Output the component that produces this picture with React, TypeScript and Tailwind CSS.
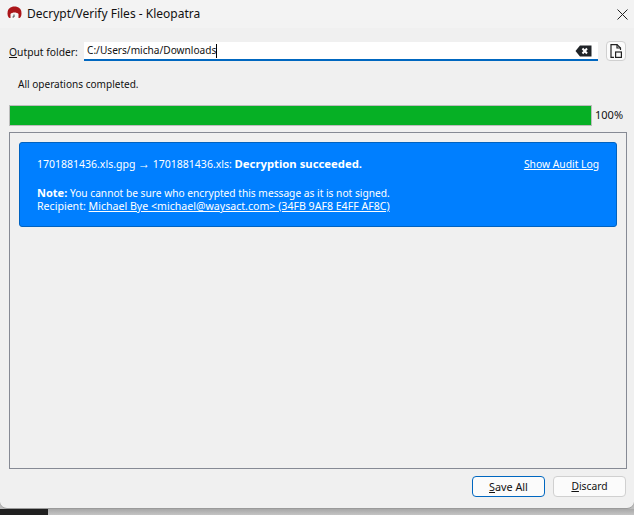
function AppIcon() {
  return (
    <svg width="15" height="15" viewBox="0 0 15 15" className="shrink-0 mb-[1px]">
      <path d="M0.5 7.5 C0.5 2.5 3.5 0.5 7.5 0.5 C11.5 0.5 14.5 2.5 14.5 7.5 C14.5 10 13.5 11.5 12.5 12 L2.5 12 C1.5 11.5 0.5 10 0.5 7.5 Z" fill="#ab1519" />
      <path d="M3.5 8 C5 6 10 6 11.5 8 L11.5 12 C10.5 15 4.5 15 3.5 12 Z" fill="#f8f6f6" />
      <path d="M7 8.5 L7 11 L5.5 11" stroke="#444" strokeWidth="1" fill="none" />
    </svg>
  );
}

function CloseIcon() {
  return (
    <svg width="11" height="11" viewBox="0 0 11 11" stroke="#222" strokeWidth="1">
      <path d="M0.5 0.5 L10.5 10.5 M10.5 0.5 L0.5 10.5" />
    </svg>
  );
}

function ClearIcon() {
  return (
    <svg width="17" height="12" viewBox="0 0 17 12">
      <path d="M5 0.5 H16.5 V11.5 H5 L0.5 6 Z" fill="#202428" />
      <path d="M7.5 3.5 L12 8.5 M12 3.5 L7.5 8.5" stroke="#fff" strokeWidth="2" />
    </svg>
  );
}

function FileIcon() {
  return (
    <svg width="12" height="14" viewBox="0 0 12 14" fill="none" stroke="#222" strokeWidth="1.2">
      <path d="M4 13.4 H1 V0.6 H7 L10.5 4 V6" />
      <path d="M7 0.6 V4 H10.5" />
      <rect x="5.6" y="8" width="5.8" height="5.4" />
    </svg>
  );
}

export default function App() {
  return (
    <div className="w-[634px] h-[515px] overflow-hidden bg-[#bdbdbd] flex flex-col font-['Noto_Sans',sans-serif] text-[10.3px] text-[#111]">
      <div className="h-[509px] shrink-0 bg-[#f0f0f0] rounded-b-[7px] border-b border-[#9a9a9a] flex flex-col">
        {/* Title bar */}
        <div className="h-[28px] shrink-0 bg-[#f3f3f3] flex items-center pl-[7px] pr-[6px]">
          <AppIcon />
          <span className="ml-[5px] text-[12px]">Decrypt/Verify Files - Kleopatra</span>
          <button className="ml-auto">
            <CloseIcon />
          </button>
        </div>

        {/* Output folder */}
        <div className="flex items-start mt-[13px] pl-[9px] h-[20px]">
          <span className="w-[75px] shrink-0 leading-[20px] mt-[1px]">
            <span className="underline">O</span>utput folder:
          </span>
          <div className="w-[514px] mt-[1px] h-[19px] bg-white border-b-2 border-[#0067c0] flex items-center pl-[3px] pr-[6px] text-[10.15px]">
            <span>C:/Users/micha/Downloads</span>
            <span className="w-px h-[14px] bg-black" />
            <span className="ml-auto flex">
              <ClearIcon />
            </span>
          </div>
          <button className="ml-[8px] w-[20px] h-[20px] bg-[#fbfbfb] border border-[#d0d0d0] rounded-[4px] flex items-center justify-center">
            <FileIcon />
          </button>
        </div>

        <div className="mt-[15px] pl-[18px] h-[16px] leading-[16px] text-[10.05px]">All operations completed.</div>

        {/* Progress */}
        <div className="mt-[13px] pl-[9px] flex items-center h-[21px]">
          <div className="w-[583px] h-[21px] bg-[#06b025] border border-[#bcbcbc]" />
          <span className="ml-[3px] text-[11px]">100%</span>
        </div>

        {/* Results */}
        <div className="mt-[6px] ml-[9px] mr-[7px] h-[337px] border border-[#868a94] pt-[9px] px-[9px]">
          <div className="h-[85px] bg-[#007fff] border border-[#0062c0] rounded-[3px] text-white px-[17px] pt-[13px]">
            <div className="flex justify-between h-[16px] leading-[16px]">
              <span className="text-[10.5px]">
                1701881436.xls.gpg <span className="font-['Liberation_Sans',sans-serif] text-[12px]">→</span> 1701881436.xls:{' '}
                <b className="text-[11.3px]">Decryption succeeded.</b>
              </span>
              <span className="underline">Show Audit Log</span>
            </div>
            <div className="mt-[14px] leading-[13px] text-[10.2px]">
              <b className="text-[11px]">Note:</b> You cannot be sure who encrypted this message as it is not signed.
            </div>
            <div className="leading-[13px] text-[10.6px]">
              Recipient:{' '}
              <span className="underline">Michael Bye &lt;michael@waysact.com&gt; (34FB 9AF8 E4FF AF8C)</span>
            </div>
          </div>
        </div>

        {/* Footer buttons */}
        <div className="mt-[7px] flex justify-end gap-[8px] pr-[8px]">
          <button className="w-[73px] h-[21px] pt-[1px] bg-[#fbfbfb] border border-[#0067c0] rounded-[4px] text-[10.8px]">
            <span className="underline">S</span>ave All
          </button>
          <button className="w-[73px] h-[21px] pt-[1px] bg-[#fbfbfb] border border-[#d0d0d0] rounded-[4px]">
            <span className="underline">D</span>iscard
          </button>
        </div>
      </div>

      {/* Desktop behind the window */}
      <div className="flex-1 flex">
        <div className="w-[48px] bg-[#202020]" />
        <div className="flex-1 bg-gradient-to-b from-[#a8a8a8] to-[#c4c4c4]" />
      </div>
    </div>
  );
}
